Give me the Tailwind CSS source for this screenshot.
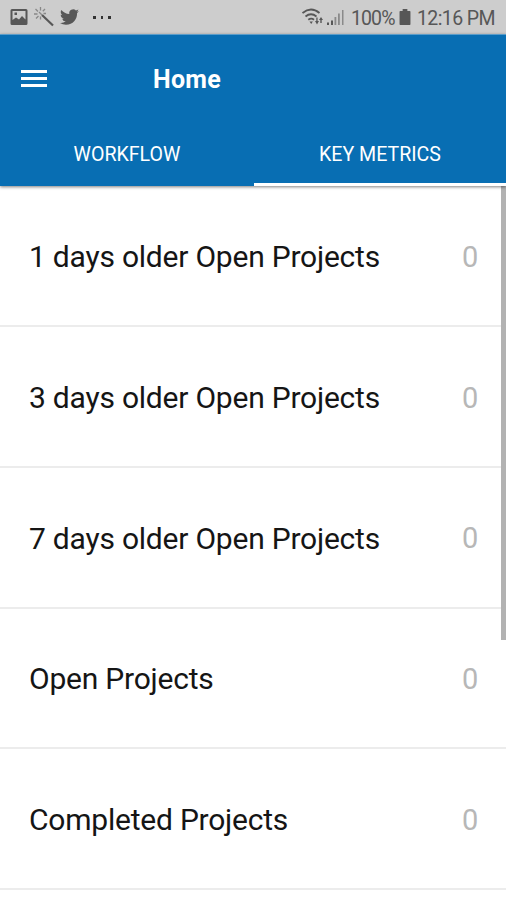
<!DOCTYPE html>
<html lang="en">
<head>
<meta charset="utf-8">
<meta name="viewport" content="width=device-width, initial-scale=1">
<title>Home</title>
<script src="https://cdn.jsdelivr.net/npm/@tailwindcss/browser@4"></script>
</head>
<body class="relative h-[900px] w-[506px] overflow-hidden bg-white font-['Roboto',sans-serif]">
<div class="flex h-[34px] items-center justify-between bg-[#cdcdcd] pr-[11px] pl-[10px] text-[#575757]">
  <div class="flex items-center">
    <svg class="h-[16px] w-[18px]" viewBox="0 0 18 16"><path fill="currentColor" fill-rule="evenodd" d="M2 0h14q1.500 0 1.500 1.500v13q0 1.500-1.500 1.500H2q-1.500 0-1.500-1.500v-13Q.5 0 2 0zM2.500 2v9l3.500-2.500 3 2 3-3.500 3.500 3.500V2zM4.500 3.500h2.500v2.500H4.500z"/></svg>
    <svg class="ml-[6px] h-[20px] w-[20px]" viewBox="0 0 20 20" fill="none" stroke="currentColor"><path stroke-width="2.200" d="M8 8l11 10.500"/><path stroke-width="1.300" stroke="#888" d="M6.500 0v3.500M1.500 2l2.500 2.500M0 7h3.500M2 11.500l2.500-2.500M6.500 9.500v3M11 2L8.800 4.300M9.500 6.500H12M5 5l3 3"/></svg>
    <svg class="ml-[6px] h-[20px] w-[19px]" viewBox="0 0 24 24" fill="currentColor"><path d="M23.950 4.570a10 10 0 0 1-2.820.780 4.960 4.960 0 0 0 2.160-2.730c-.950.560-2 .960-3.130 1.190a4.920 4.920 0 0 0-8.380 4.480C7.690 8.100 4.070 6.130 1.640 3.160a4.820 4.820 0 0 0-.670 2.480c0 1.710.870 3.210 2.190 4.100a4.900 4.900 0 0 1-2.230-.620v.060a4.920 4.920 0 0 0 3.950 4.830 5 5 0 0 1-2.210.080 4.940 4.940 0 0 0 4.600 3.420A9.870 9.870 0 0 1 0 19.540a13.990 13.990 0 0 0 7.550 2.210c9.050 0 14-7.500 14-13.980 0-.210 0-.420-.020-.630a9.940 9.940 0 0 0 2.420-2.570z"/></svg>
    <div class="mt-px ml-[14px] flex gap-[5px]"><i class="size-[2.500px] bg-[#333]"></i><i class="size-[2.500px] bg-[#333]"></i><i class="size-[2.500px] bg-[#333]"></i></div>
  </div>
  <div class="flex items-center">
    <svg class="h-[18px] w-[22px]" viewBox="0 0 22 18" fill="none" stroke="currentColor" stroke-width="1.800"><path d="M.5 5Q9 -2 17.500 5M3.500 8.500q5.500-4.500 11 0M6.300 11.800q3-2.300 5.700 0"/><path fill="currentColor" stroke="none" d="M7.500 13.500h3.400L9.200 16zM13 13h1.300V9.500h1.300V13H17l-2 3.500zM17 12l2-3 2 3h-1.300v3h-1.400v-3z"/></svg>
    <svg class="mr-[7px] ml-[3px] h-[16px] w-[17px]" viewBox="0 0 17 16"><path fill="currentColor" d="M0 13.500h2V16H0zM4 11.500h2V16H4z"/><path fill="#8a8a8a" d="M7.500 8h1.800v8H7.500zM11 4.500h1.800V16H11zM15 1h1.500v15H15z"/></svg>
    <span class="w-[43px] pt-[4px] text-[19.500px] leading-none tracking-[-0.900px] whitespace-nowrap">100%</span>
    <svg class="mr-[6px] ml-[5px] h-[16px] w-[12px]" viewBox="0 0 12 17"><path fill="currentColor" d="M3.500 0h5v2H11q.8 0 .8.800v13.400q0 .8-.8.800H1q-.8 0-.8-.8V2.800Q.2 2 1 2h2.500z"/></svg>
    <span class="w-[78px] pt-[4px] text-[19.500px] leading-none tracking-[-0.600px] whitespace-nowrap">12:16 PM</span>
  </div>
</div>
<header class="relative z-10 h-[152px] border-t border-[#5b9dca] bg-[#086eb3] text-white shadow-[0_1px_3px_rgba(0,0,0,0.5)]">
  <div class="flex h-[87px] items-center pl-[21px]">
    <div class="flex w-[26px] flex-col gap-[4px]"><i class="h-[3px] bg-white"></i><i class="h-[3px] bg-white"></i><i class="h-[3px] bg-white"></i></div>
    <h1 class="ml-[106px] pt-px text-[25px] leading-none font-bold tracking-[0.300px]">Home</h1>
  </div>
  <nav class="flex h-[64px] text-[19.600px] leading-none">
    <div class="flex w-[254px] items-center justify-center pt-px"><span>WORKFLOW</span></div>
    <div class="flex flex-1 items-center justify-center border-b-[3px] border-white pt-[4px]"><span>KEY METRICS</span></div>
  </nav>
</header>
<main class="pt-[0.500px] text-[30px] leading-none tracking-[-0.220px] text-[#151515]">
  <div class="flex h-[140.700px] items-center justify-between border-b-2 border-[#ececec] pr-[28px] pl-[29px] pt-[3px]"><span>1 days older Open Projects</span><span class="text-[29px] text-[#b7b7b7]">0</span></div>
  <div class="flex h-[140.700px] items-center justify-between border-b-2 border-[#ececec] pr-[28px] pl-[29px] pt-[3px]"><span>3 days older Open Projects</span><span class="text-[29px] text-[#b7b7b7]">0</span></div>
  <div class="flex h-[140.700px] items-center justify-between border-b-2 border-[#ececec] pr-[28px] pl-[29px] pt-[3px]"><span>7 days older Open Projects</span><span class="text-[29px] text-[#b7b7b7]">0</span></div>
  <div class="flex h-[140.700px] items-center justify-between border-b-2 border-[#ececec] pr-[28px] pl-[29px] pt-[3px]"><span>Open Projects</span><span class="text-[29px] text-[#b7b7b7]">0</span></div>
  <div class="flex h-[140.700px] items-center justify-between border-b-2 border-[#ececec] pr-[28px] pl-[29px] pt-[3px]"><span>Completed Projects</span><span class="text-[29px] text-[#b7b7b7]">0</span></div>
</main>
<div class="absolute top-[186px] right-0 h-[454px] w-[5px] bg-[#b2b2b2]"></div>
</body>
</html>
